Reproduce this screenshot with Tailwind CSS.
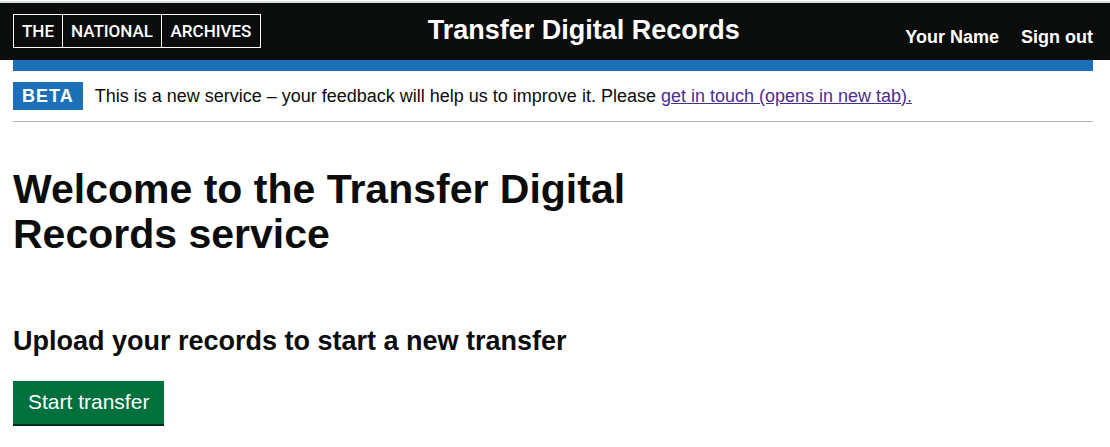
<!DOCTYPE html>
<html lang="en">
<head>
<meta charset="utf-8">
<title>Transfer Digital Records</title>
<script src="https://cdn.jsdelivr.net/npm/@tailwindcss/browser@4"></script>
</head>
<body class="bg-white text-[#0b0c0c] font-['Liberation_Sans',Arial,sans-serif]">
<div class="mt-px h-0.5 bg-[#dadddd]"></div>
<header class="bg-[#0b0c0c] text-white">
  <div class="grid grid-cols-[27fr_auto_23fr] pb-3 pl-[13px] pr-[17px]">
    <a href="#" aria-label="The National Archives" class="mt-[11px] flex h-[34px] w-[248px] divide-x divide-white border border-white font-[Roboto,sans-serif] text-[17px] font-medium leading-8">
      <span class="w-[49px] text-center">THE</span>
      <span class="w-[99px] text-center">NATIONAL</span>
      <span class="w-[98px] text-center">ARCHIVES</span>
    </a>
    <a href="#" class="mt-3 text-[27px] leading-[30px] font-bold">Transfer Digital Records</a>
    <nav class="mt-6 flex justify-end gap-[22px] text-lg leading-5 font-bold">
      <a href="#">Your Name</a>
      <a href="#">Sign out</a>
    </nav>
  </div>
</header>
<div class="pl-[13px] pr-[17px]">
  <div class="h-[11px] bg-[#1d70b8]"></div>
  <div class="flex items-center gap-3 border-b border-[#b1b4b6] py-[11px]">
    <strong class="bg-[#1d70b8] px-[9px] text-lg leading-7 tracking-[1px] text-white">BETA</strong>
    <p class="text-lg leading-7">This is a new service – your feedback will help us to improve it. Please <a href="#" class="text-[#4c2c92] underline">get in touch (opens in new tab).</a></p>
  </div>
  <main class="pt-[45px]">
    <h1 class="max-w-[700px] text-[41px] leading-[45px] font-bold">Welcome to the Transfer Digital Records service</h1>
    <h2 class="mt-[69px] text-[27px] leading-[30px] font-bold">Upload your records to start a new transfer</h2>
    <button type="button" class="mt-[25px] h-[45px] border-b-2 border-[#002d18] bg-[#00703c] px-[15px] pb-0.5 text-[21px] text-white">Start transfer</button>
  </main>
</div>
</body>
</html>
